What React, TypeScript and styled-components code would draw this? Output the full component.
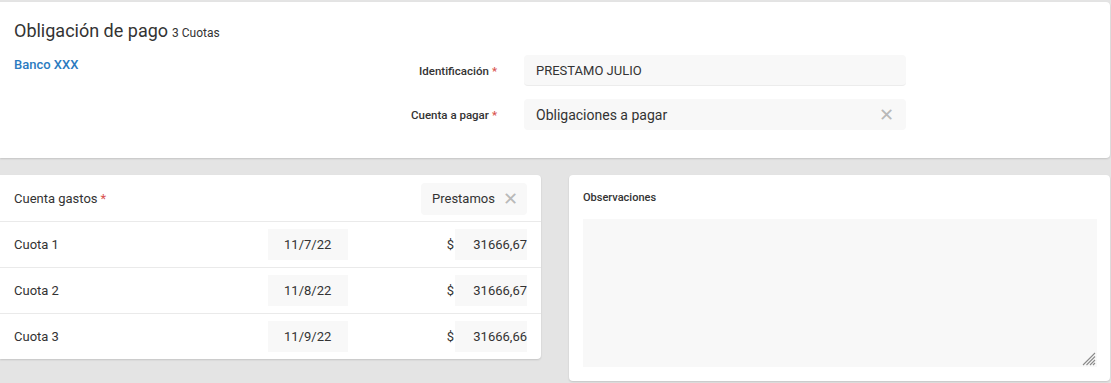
import React from "react";
import styled, { createGlobalStyle } from "styled-components";

const Global = createGlobalStyle`
  html, body { margin: 0; padding: 0; background: #e4e4e4; }
  body { font-family: Roboto, "Liberation Sans", Arial, sans-serif; color: #333; }
  * { box-sizing: border-box; }
`;

const Page = styled.div`
  width: 1111px;
  height: 383px;
  padding: 2px 1px 0 0;
  display: flex;
  flex-direction: column;
  gap: 17px;
`;

const Card = styled.div`
  background: #fff;
  border-radius: 0 4px 4px 0;
  box-shadow: 0 1px 2px rgba(0, 0, 0, 0.14);
`;

const TopCard = styled(Card)`
  height: 156px;
  padding: 18px 14px 0 14px;
`;

const Title = styled.div`
  font-size: 18px;
  line-height: 22px;
  color: #333;
  span {
    font-size: 12px;
    margin-left: 4px;
  }
`;

const TopBody = styled.div`
  display: grid;
  grid-template-columns: 329px 127px 382px;
  column-gap: 27px;
  row-gap: 13px;
  margin-top: 11px;
  align-items: center;
`;

const BankLink = styled.a`
  grid-row: 1;
  grid-column: 1;
  align-self: start;
  font-size: 13px;
  font-weight: 500;
  color: #2b7bc0;
  text-decoration: none;
  margin-top: 2px;
`;

const Label = styled.label`
  grid-column: 2;
  text-align: right;
  font-size: 11.5px;
  font-weight: 500;
  color: #333;
`;

const Req = styled.span`
  color: #d9534f;
  margin-left: 3px;
`;

const Input = styled.div<{ $underline?: boolean; $size?: number }>`
  grid-column: 3;
  height: 31px;
  background: #f8f8f8;
  border-radius: 4px;
  border-bottom: ${(p) => (p.$underline ? "1px solid #ececec" : "none")};
  display: flex;
  align-items: center;
  justify-content: space-between;
  padding: 0 12px;
  font-size: ${(p) => p.$size ?? 13}px;
  color: #333;
`;

const Clear = styled.span`
  color: #b9b9b9;
  font-size: 18px;
  line-height: 1;
  font-weight: 300;
`;

const Bottom = styled.div`
  display: grid;
  grid-template-columns: 541px 541px;
  column-gap: 28px;
  align-items: start;
`;

const ListCard = styled(Card)``;

const Row = styled.div`
  height: 46px;
  display: flex;
  align-items: center;
  padding: 0 14px;
  font-size: 13px;
  color: #333;
  & + & {
    border-top: 1px solid #eaeaea;
  }
`;

const RowLabel = styled.div`
  flex: 1;
`;

const Chip = styled.div`
  height: 32px;
  width: 106px;
  background: #f8f8f8;
  border-radius: 4px;
  display: flex;
  align-items: center;
  justify-content: space-between;
  padding: 0 9px 0 11px;
  font-size: 13px;
  margin-top: 1px;
`;

const DateBox = styled.div`
  width: 80px;
  height: 31px;
  background: #f8f8f8;
  display: flex;
  align-items: center;
  justify-content: center;
  font-size: 13px;
  margin-right: 99px;
`;

const Currency = styled.span`
  font-size: 13px;
  margin-right: 1px;
`;

const Amount = styled.div`
  width: 72px;
  height: 31px;
  background: #f8f8f8;
  display: flex;
  align-items: center;
  justify-content: flex-end;
  font-size: 13px;
`;

const ObsCard = styled(Card)`
  border-radius: 4px;
  height: 206px;
  padding: 16px 13px 14px 14px;
  display: flex;
  flex-direction: column;
`;

const ObsLabel = styled.div`
  font-size: 11px;
  font-weight: 500;
  color: #333;
  height: 28px;
`;

const AreaWrap = styled.div`
  flex: 1;
  position: relative;
  display: flex;
`;

const TextArea = styled.textarea`
  flex: 1;
  width: 100%;
  background: #f8f8f8;
  border: none;
  outline: none;
  border-radius: 0;
  resize: none;
  font-family: inherit;
  font-size: 13px;
`;

const Grip = styled.svg`
  position: absolute;
  right: 1px;
  bottom: 1px;
  pointer-events: none;
`;

const cuotas = [
  { name: "Cuota 1", date: "11/7/22", amount: "31666,67" },
  { name: "Cuota 2", date: "11/8/22", amount: "31666,67" },
  { name: "Cuota 3", date: "11/9/22", amount: "31666,66" },
];

export default function App() {
  return (
    <>
      <Global />
      <Page>
        <TopCard>
          <Title>
            Obligación de pago<span>3 Cuotas</span>
          </Title>
          <TopBody>
            <BankLink href="#">Banco XXX</BankLink>
            <Label>
              Identificación<Req>*</Req>
            </Label>
            <Input $underline>PRESTAMO JULIO</Input>
            <Label>
              Cuenta a pagar<Req>*</Req>
            </Label>
            <Input $size={14}>
              Obligaciones a pagar<Clear>✕</Clear>
            </Input>
          </TopBody>
        </TopCard>
        <Bottom>
          <ListCard>
            <Row>
              <RowLabel>
                Cuenta gastos<Req>*</Req>
              </RowLabel>
              <Chip>
                Prestamos<Clear>✕</Clear>
              </Chip>
            </Row>
            {cuotas.map((c) => (
              <Row key={c.name}>
                <RowLabel>{c.name}</RowLabel>
                <DateBox>{c.date}</DateBox>
                <Currency>$</Currency>
                <Amount>{c.amount}</Amount>
              </Row>
            ))}
          </ListCard>
          <ObsCard>
            <ObsLabel>Observaciones</ObsLabel>
            <AreaWrap>
              <TextArea />
              <Grip width="14" height="14" viewBox="0 0 14 14">
                <g stroke="#8a8a8a" strokeWidth="1.1">
                  <line x1="1" y1="13" x2="13" y2="1" />
                  <line x1="4.5" y1="13" x2="13" y2="4.5" />
                  <line x1="8" y1="13" x2="13" y2="8" />
                  <line x1="11" y1="13" x2="13" y2="11" />
                </g>
              </Grip>
            </AreaWrap>
          </ObsCard>
        </Bottom>
      </Page>
    </>
  );
}
